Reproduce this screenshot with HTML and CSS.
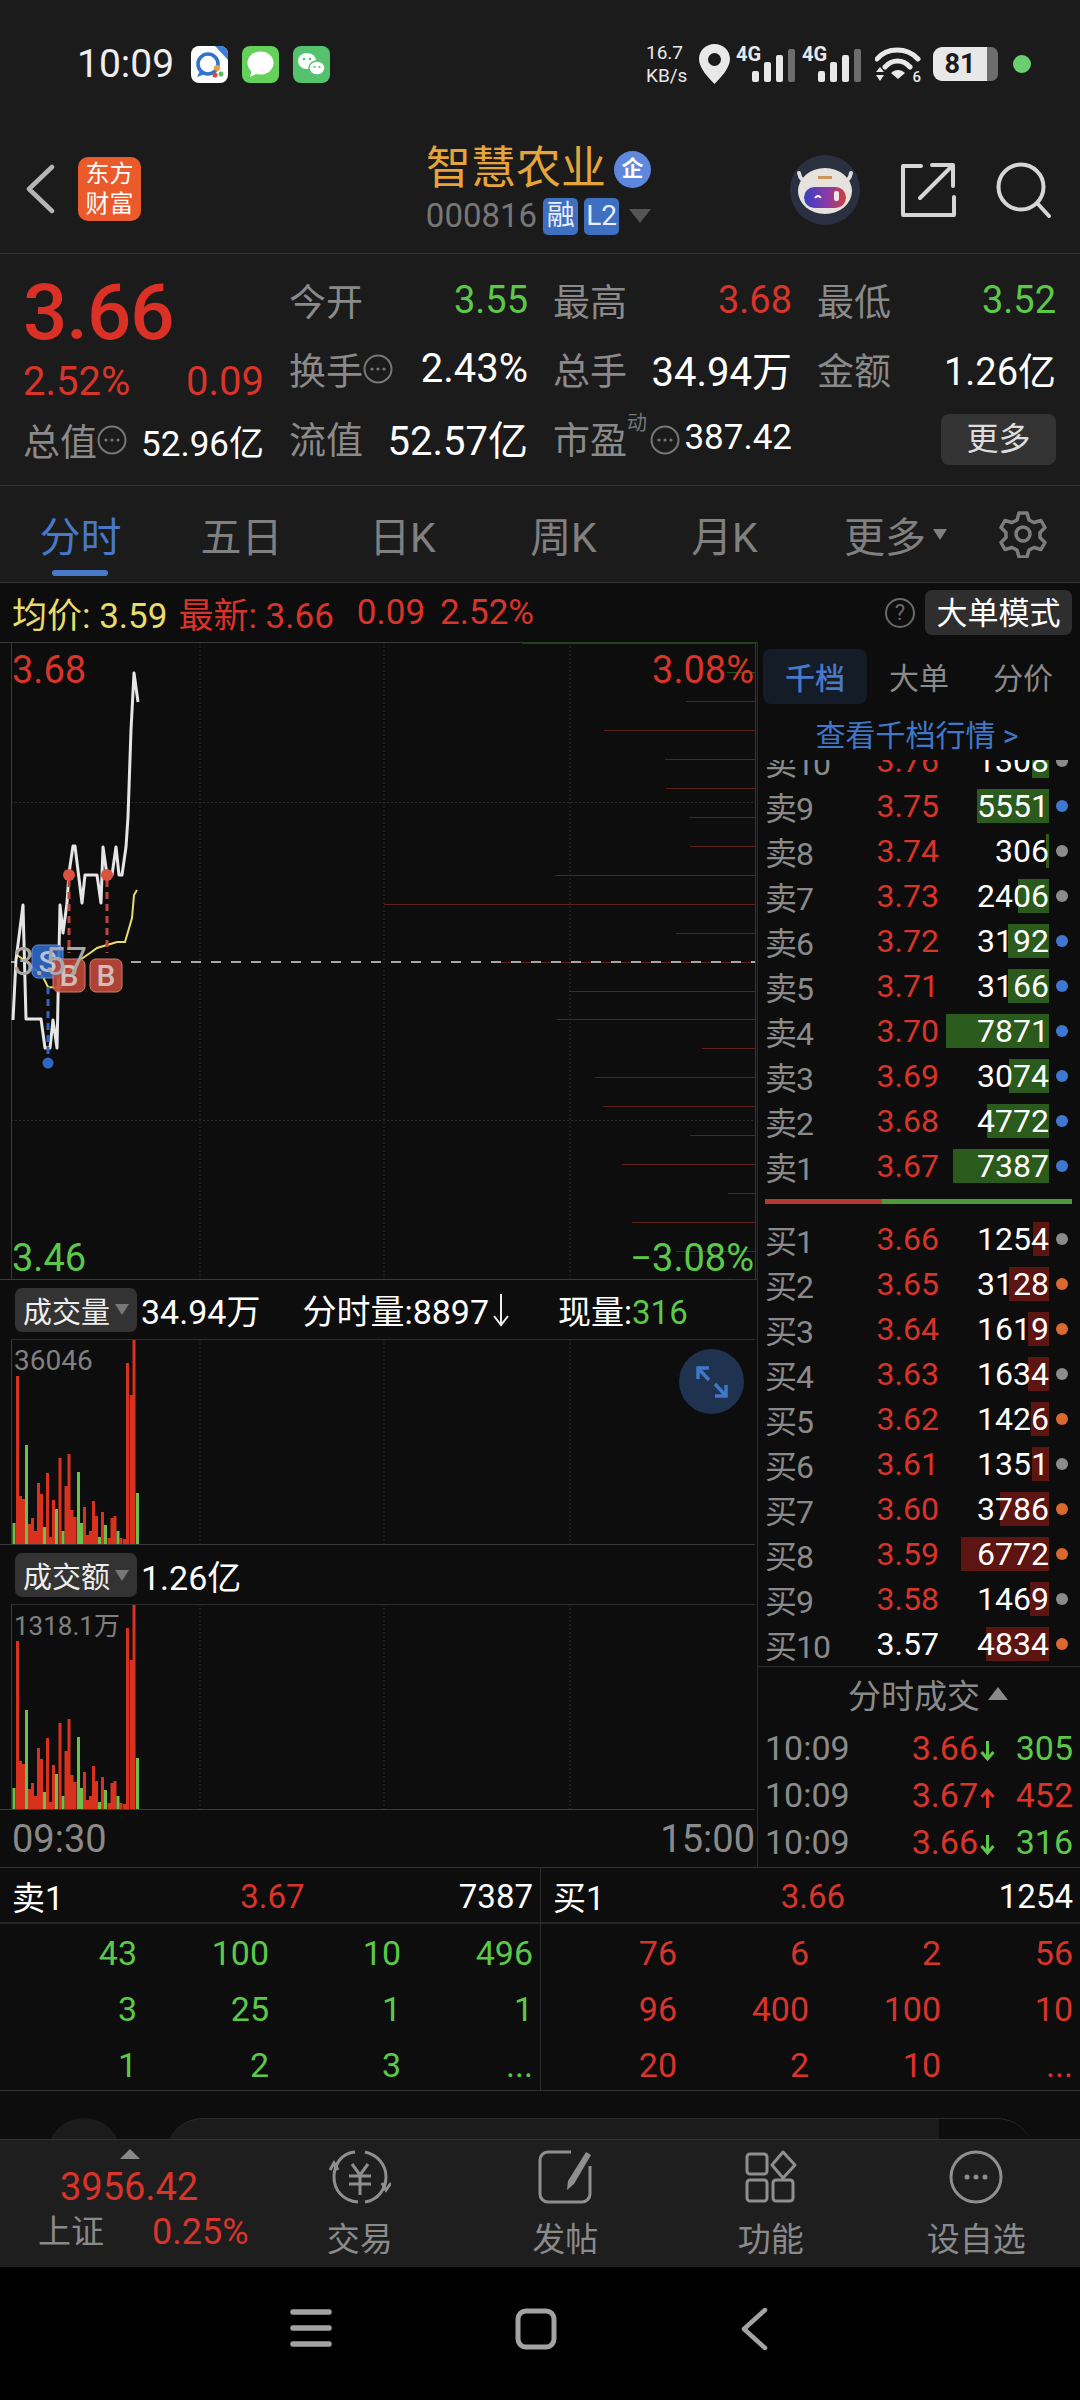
FILE: index.html
```html
<!DOCTYPE html>
<html lang="zh-CN">
<head>
<meta charset="UTF-8">
<title>智慧农业 000816</title>
<link rel="stylesheet" href="styles.css">
</head>
<body>

<svg class="defs" width="0" height="0">
    <symbol id="more-dots" viewBox="0 0 30 30">
        <circle cx="15" cy="15" r="13.5" fill="none" stroke="#777" stroke-width="2"/>
        <circle cx="9" cy="15" r="1.6" fill="#777"/>
        <circle cx="15" cy="15" r="1.6" fill="#777"/>
        <circle cx="21" cy="15" r="1.6" fill="#777"/>
    </symbol>
    <symbol id="vol-bars" viewBox="0 0 757 207">
        <g stroke-width="3" fill="none">
            <path stroke="#d8321f" d="M17.5 205V37M20.5 205V157M23.5 205V160M29.5 205V185M32.5 205V179M35.5 205V192M38.5 205V144M41.5 205V155M47.5 205V134M50.5 205V198M53.5 205V161M60 205V119M66 205V147M69 205V115M72 205V171M75 205V178M84.5 205V168M87.5 205V196M90.5 205V192M93.5 205V162M96.5 205V177M102.5 205V173M109 205V199M112 205V179M115 205V177M121 205V199M124.5 205V200M127.5 205V24M131 205V56M134 205V0"/>
            <path stroke="#6cc04a" d="M14 205V184M26.5 205V106M44.5 205V188M56.5 205V170M63 205V192M78.5 205V133M81.5 205V184M99.5 205V198M105.5 205V186M118 205V192M137.5 205V154"/>
        </g>
        <g stroke="#2c2c2c" fill="none">
            <path d="M11.5 0V206M0 205.5H755" stroke="#3a3a3a"/>
            <path d="M200 0V205M384 0V205M570 0V205" stroke-dasharray="2 2"/>
            <path d="M11 .5H755"/>
        </g>
    </symbol>
</svg>

<!-- status bar -->
<div class="statusbar">
    <span class="clock">10:09</span>
    <div class="app-icons">
        <svg width="37" height="37" viewBox="0 0 37 37">
            <rect width="37" height="37" rx="8" fill="#fff"/>
            <path d="M24 0h5a8 8 0 0 1 8 8v6z" fill="#3c7fd6"/>
            <circle cx="17" cy="18" r="10" fill="none" stroke="#2f73cf" stroke-width="3.5"/>
            <path d="M9 25l-3 6 8-3z" fill="#2f73cf"/>
            <circle cx="26" cy="22" r="3" fill="#e9a13b"/>
            <circle cx="24" cy="29" r="2.5" fill="#d9453a"/>
            <circle cx="30" cy="28" r="2.5" fill="#5cb85c"/>
        </svg>
        <svg width="37" height="37" viewBox="0 0 37 37">
            <rect width="37" height="37" rx="8" fill="#64d25a"/>
            <ellipse cx="18.5" cy="17" rx="13" ry="11.5" fill="#fff"/>
            <path d="M10 24l-2 7 8-4z" fill="#fff"/>
        </svg>
        <svg width="37" height="37" viewBox="0 0 37 37">
            <rect width="37" height="37" rx="8" fill="#55c36e"/>
            <ellipse cx="14" cy="15" rx="9" ry="8" fill="#fff"/>
            <ellipse cx="24" cy="22" rx="8" ry="7" fill="#fff" stroke="#55c36e" stroke-width="1.5"/>
            <circle cx="11" cy="13" r="1.3" fill="#55c36e"/>
            <circle cx="17" cy="13" r="1.3" fill="#55c36e"/>
            <circle cx="21.5" cy="21" r="1.1" fill="#55c36e"/>
            <circle cx="26.5" cy="21" r="1.1" fill="#55c36e"/>
        </svg>
    </div>
    <div class="sys-icons">
        <span class="netspeed">16.7<br>KB/s</span>
        <svg width="31" height="40" viewBox="0 0 31 40">
            <path fill-rule="evenodd" fill="#e8e8e8" d="M15.5 0C7 0 0 6.6 0 15c0 9 9.5 19 15.5 25C21.5 34 31 24 31 15 31 6.6 24 0 15.5 0zm0 9a6.5 6.5 0 1 1 0 13 6.500 6.500 0 0 1 0-13z"/>
        </svg>
        <div class="cell">
            <span class="cell-text">4G</span>
            <svg width="60" height="40" viewBox="0 0 60 40">
                <rect x="16" y="27" width="7" height="11" rx="2" fill="#e8e8e8"/>
                <rect x="28" y="18" width="7" height="20" rx="2" fill="#e8e8e8"/>
                <rect x="40" y="11" width="7" height="27" rx="2" fill="#e8e8e8"/>
                <rect x="52" y="5" width="7" height="33" rx="2" fill="#6d6d6d"/>
            </svg>
        </div>
        <div class="cell">
            <span class="cell-text">4G</span>
            <svg width="60" height="40" viewBox="0 0 60 40">
                <rect x="16" y="27" width="7" height="11" rx="2" fill="#e8e8e8"/>
                <rect x="28" y="18" width="7" height="20" rx="2" fill="#e8e8e8"/>
                <rect x="40" y="11" width="7" height="27" rx="2" fill="#e8e8e8"/>
                <rect x="52" y="5" width="7" height="33" rx="2" fill="#6d6d6d"/>
            </svg>
        </div>
        <div class="wifi">
            <svg width="46" height="38" viewBox="0 0 46 38">
                <path d="M2 14C12 2 32 2 43 14M10 22c7-8 18-8 25 0" fill="none" stroke="#e8e8e8" stroke-width="5" stroke-linecap="round"/>
                <path d="M16 28c4-4 10-4 14 0l-7 6z" fill="#e8e8e8"/>
                <path d="M1 27l4-5 4 5zM1 30l4 6 4-6z" fill="#e8e8e8"/>
            </svg>
            <span class="wifi-text">6</span>
        </div>
        <div class="battery"><span class="battery-level">81</span><i class="battery-rest"></i></div>
        <i class="cam-dot"></i>
    </div>
</div>

<!-- stock header -->
<header class="stock-head">
    <div class="head-left">
        <svg width="30" height="50" viewBox="0 0 30 50">
            <path d="M27 3L4 25l23 22" fill="none" stroke="#b5b5b5" stroke-width="4.5" stroke-linecap="round" stroke-linejoin="round"/>
        </svg>
        <div class="brand">东方<br>财富</div>
    </div>
    <div class="head-title">
        <div class="stock-name">智慧农业<span class="qi">企</span></div>
        <div class="stock-code">000816<span class="tag-blue">融</span><span class="tag-blue">L2</span><i class="caret-code"></i></div>
    </div>
    <div class="head-right">
        <svg width="70" height="70" viewBox="0 0 70 70">
            <defs>
                <linearGradient id="visor" x1="0" x2="1">
                    <stop offset="0" stop-color="#3a3fc0"/>
                    <stop offset=".55" stop-color="#8a3aa8"/>
                    <stop offset="1" stop-color="#d0403f"/>
                </linearGradient>
            </defs>
            <circle cx="35" cy="35" r="35" fill="#2a3040"/>
            <path d="M9 18c1 6 5 9 9 9M61 18c-1 6-5 9-9 9" fill="none" stroke="#ddd" stroke-width="4" stroke-linecap="round"/>
            <ellipse cx="35" cy="36" rx="27" ry="23" fill="#e6e3df"/>
            <rect x="28" y="21" width="14" height="3" fill="#c9975a"/>
            <rect x="14" y="32" width="42" height="21" rx="10.5" fill="url(#visor)"/>
            <path d="M25 43q3-4 6 0" fill="none" stroke="#fff" stroke-width="1.8"/>
            <rect x="44" y="36" width="5" height="10" rx="2" fill="#f3e6e6"/>
        </svg>
        <svg width="56" height="56" viewBox="0 0 56 56">
            <path d="M21 4H3v49h51V35M20 36L53 3M32 3h21v21" fill="none" stroke="#d6d6d6" stroke-width="4" stroke-linecap="round" stroke-linejoin="round"/>
        </svg>
        <svg width="56" height="56" viewBox="0 0 56 56">
            <circle cx="25" cy="25" r="22.5" fill="none" stroke="#d6d6d6" stroke-width="4"/>
            <path d="M42 42l11 12" fill="none" stroke="#d6d6d6" stroke-width="4" stroke-linecap="round"/>
        </svg>
    </div>
</header>

<!-- quote block -->
<section class="quote">
    <div class="quote-main">
        <div class="big-price">3.66</div>
        <div class="big-change"><span>2.52%</span><span>0.09</span></div>
        <div class="total-val"><span class="lbl">总值</span><svg class="info"><use href="#more-dots"/></svg><span class="val-sm">52.96亿</span></div>
    </div>
    <div class="quote-grid">
        <div class="cell-q"><span class="lbl">今开</span><span class="green">3.55</span></div>
        <div class="cell-q"><span class="lbl">最高</span><span class="red">3.68</span></div>
        <div class="cell-q"><span class="lbl">最低</span><span class="green">3.52</span></div>
        <div class="cell-q"><span class="lbl">换手<svg class="info"><use href="#more-dots"/></svg></span><span class="white val-lg">2.43%</span></div>
        <div class="cell-q"><span class="lbl">总手</span><span class="white val-lg">34.94万</span></div>
        <div class="cell-q"><span class="lbl">金额</span><span class="white">1.26亿</span></div>
        <div class="cell-q"><span class="lbl">流值</span><span class="white val-lg">52.57亿</span></div>
        <div class="cell-q"><span class="lbl pe">市盈<sup>动</sup><svg class="info"><use href="#more-dots"/></svg></span><span class="white val-sm">387.42</span></div>
        <div class="cell-q cell-btn"><span class="more-btn">更多</span></div>
    </div>
</section>

<!-- period tabs -->
<nav class="periods">
    <div class="period active"><span>分时</span></div>
    <div class="period"><span>五日</span></div>
    <div class="period"><span>日K</span></div>
    <div class="period"><span>周K</span></div>
    <div class="period"><span>月K</span></div>
    <div class="period period-more"><span>更多</span><i class="caret-small"></i></div>
    <div class="period">
        <svg width="48" height="48" viewBox="0 0 48 48">
            <path d="M20 3h8l2 7 5 2.5 7-2 4 7-5 5v5l5 5-4 7-7-2-5 2.5-2 7h-8l-2-7-5-2.5-7 2-4-7 5-5v-5l-5-5 4-7 7 2 5-2.5z" fill="none" stroke="#7d7d7d" stroke-width="3.5" stroke-linejoin="round"/>
            <circle cx="24" cy="24" r="7" fill="none" stroke="#7d7d7d" stroke-width="3.5"/>
        </svg>
    </div>
</nav>

<!-- avg / last line -->
<div class="infobar">
    <span class="yellow">均价: 3.59</span>
    <span class="red last">最新: 3.66</span>
    <span class="red">0.09</span>
    <span class="red">2.52%</span>
    <span class="help">?</span>
    <span class="big-order">大单模式</span>
</div>

<main class="board">
    <div class="charts">
        <div class="price-chart">
            <svg class="price-svg" width="757" height="638" viewBox="0 642 757 638">
                <!-- grid -->
                <g fill="none" stroke="#2c2c2c">
                    <path d="M200 642V1279M384 642V1279M570 642V1279M11 802.5H755M11 1120.5H755" stroke-dasharray="2 2"/>
                    <path d="M0 642.5H757M0 1279.5H757" stroke="#3a3a3a"/>
                    <path d="M11.5 642V1279M755.5 642V1279" stroke="#3a3a3a"/>
                </g>
                <rect x="522" y="641" width="233" height="3" fill="#24401f"/>
                <!-- order ladder -->
                <g fill="none" stroke="#5c1f1a">
                    <path stroke="#1f5a1a" d="M727 672.5H755"/>
                    <path d="M686 701.5H755M604 730.5H755M665 759.5H755M666 788.5H755M689 817.5H755M690 846.5H755M555 875.5H755M384 904.5H755M676 933.5H755M501 962.5H755M569 991.5H755M557 1019.5H755M702 1048.5H755M595 1077.5H755M603 1106.5H755M690 1135.5H755M622 1164.5H755M728 1193.5H755M632 1222.5H755M676 1251.5H755M733 1279.5H755"/>
                </g>
                <path d="M131 962H755M11 962H17" fill="none" stroke="#a8a8a8" stroke-width="2" stroke-dasharray="10 10"/>
                <!-- avg and price lines -->
                <polyline fill="none" stroke="#e9dc6a" stroke-width="2" points="17,955 27,962 43,977 48,987 60,988 67,973 80,960 90,953 97,948 107,945 117,942 125,942 132,918 134,895 137,890"/>
                <polyline fill="none" stroke="#e6e6e6" stroke-width="3" stroke-linejoin="round" points="13,1020 16,960 23,905 26,1019 41,1019 45,1048 50,1048 53,1020 57,1048 60,905 63,933 67,903 69,873 73,846 75,846 82,903 85,875 97,875 101,903 103,847 107,875 112,875 116,847 119,875 122,875 126,847 128,817 131,730 134,673 138,702"/>
                <!-- trade markers -->
                <path d="M69 880V953M107 880V953" fill="none" stroke="#b9483c" stroke-width="3" stroke-dasharray="7 5"/>
                <circle cx="69" cy="875" r="6" fill="#d9533f"/>
                <circle cx="107" cy="875" r="6" fill="#d9533f"/>
                <path d="M48 987V1057" fill="none" stroke="#2f66c4" stroke-width="3" stroke-dasharray="7 5"/>
                <circle cx="48" cy="1063" r="5.5" fill="#2f66c4"/>
                <rect x="32" y="945" width="31" height="33" rx="6" fill="#2f66c4" fill-opacity=".9" stroke="#5f8ddc"/>
                <rect x="53" y="959" width="32" height="33" rx="6" fill="#c0483a" fill-opacity=".9" stroke="#d67a6e"/>
                <rect x="90" y="959" width="32" height="33" rx="6" fill="#c0483a" fill-opacity=".9" stroke="#d67a6e"/>
                <text x="47.5" y="972" class="marker">S</text>
                <text x="69" y="986" class="marker">B</text>
                <text x="106" y="986" class="marker">B</text>
                <text x="13" y="975" class="prev-close">3.57</text>
            </svg>
            <span class="axis top-left red">3.68</span>
            <span class="axis top-right red">3.08%</span>
            <span class="axis bot-left green">3.46</span>
            <span class="axis bot-right green">−3.08%</span>
        </div>

        <div class="tagrow">
            <span class="tag">成交量<i class="caret-tag"></i></span>
            <span class="w1">34.94万</span>
            <span class="w2">分时量:8897</span>
            <svg class="down-arrow" width="18" height="34" viewBox="0 0 18 34"><path d="M9 1v30M2 23l7 9 7-9" fill="none" stroke="#eee" stroke-width="2"/></svg>
            <span class="w3">现量:<span class="green">316</span></span>
        </div>
        <div class="vol-chart">
            <svg class="vol-svg" width="757" height="207"><use href="#vol-bars"/></svg>
            <span class="vol-max">36046</span>
            <span class="expand">
                <svg width="34" height="34" viewBox="0 0 34 34">
                    <path d="M3 14V3h11M3 3l11 12M31 20v11H20M31 31L20 19" fill="none" stroke="#3f78c8" stroke-width="3.5"/>
                </svg>
            </span>
        </div>

        <div class="tagrow tagrow-b">
            <span class="tag">成交额<i class="caret-tag"></i></span>
            <span class="w1">1.26亿</span>
        </div>
        <div class="vol-chart">
            <svg class="vol-svg" width="757" height="207"><use href="#vol-bars"/></svg>
            <span class="vol-max vol-max-wan">1318.1万</span>
        </div>

        <div class="timerow"><span>09:30</span><span>15:00</span></div>
    </div>

    <aside class="book">
        <div class="book-tabs">
            <span class="book-tab active">千档</span>
            <span class="book-tab">大单</span>
            <span class="book-tab">分价</span>
        </div>
        <div class="book-link">查看千档行情 &gt;</div>

        <div class="levels">
            <div class="asks">
                <div class="row"><span class="lvl">卖10</span><span class="px red">3.76</span><span class="qty"><i class="bar bar-s" style="width:17px"></i><b>1308</b></span><i class="dot grey"></i></div>
                <div class="row"><span class="lvl">卖9</span><span class="px red">3.75</span><span class="qty"><i class="bar bar-s" style="width:72px"></i><b>5551</b></span><i class="dot blue"></i></div>
                <div class="row"><span class="lvl">卖8</span><span class="px red">3.74</span><span class="qty"><i class="bar bar-s" style="width:3px"></i><b>306</b></span><i class="dot grey"></i></div>
                <div class="row"><span class="lvl">卖7</span><span class="px red">3.73</span><span class="qty"><i class="bar bar-s" style="width:31px"></i><b>2406</b></span><i class="dot grey"></i></div>
                <div class="row"><span class="lvl">卖6</span><span class="px red">3.72</span><span class="qty"><i class="bar bar-s" style="width:41px"></i><b>3192</b></span><i class="dot blue"></i></div>
                <div class="row"><span class="lvl">卖5</span><span class="px red">3.71</span><span class="qty"><i class="bar bar-s" style="width:41px"></i><b>3166</b></span><i class="dot blue"></i></div>
                <div class="row"><span class="lvl">卖4</span><span class="px red">3.70</span><span class="qty"><i class="bar bar-s" style="width:103px"></i><b>7871</b></span><i class="dot blue"></i></div>
                <div class="row"><span class="lvl">卖3</span><span class="px red">3.69</span><span class="qty"><i class="bar bar-s" style="width:40px"></i><b>3074</b></span><i class="dot blue"></i></div>
                <div class="row"><span class="lvl">卖2</span><span class="px red">3.68</span><span class="qty"><i class="bar bar-s" style="width:62px"></i><b>4772</b></span><i class="dot blue"></i></div>
                <div class="row"><span class="lvl">卖1</span><span class="px red">3.67</span><span class="qty"><i class="bar bar-s" style="width:96px"></i><b>7387</b></span><i class="dot blue"></i></div>
            </div>
            <div class="ratio"><i class="ratio-red"></i><i class="ratio-green"></i></div>
            <div class="bids">
                <div class="row"><span class="lvl">买1</span><span class="px red">3.66</span><span class="qty"><i class="bar bar-b" style="width:16px"></i><b>1254</b></span><i class="dot grey"></i></div>
                <div class="row"><span class="lvl">买2</span><span class="px red">3.65</span><span class="qty"><i class="bar bar-b" style="width:40px"></i><b>3128</b></span><i class="dot orange"></i></div>
                <div class="row"><span class="lvl">买3</span><span class="px red">3.64</span><span class="qty"><i class="bar bar-b" style="width:21px"></i><b>1619</b></span><i class="dot orange"></i></div>
                <div class="row"><span class="lvl">买4</span><span class="px red">3.63</span><span class="qty"><i class="bar bar-b" style="width:21px"></i><b>1634</b></span><i class="dot grey"></i></div>
                <div class="row"><span class="lvl">买5</span><span class="px red">3.62</span><span class="qty"><i class="bar bar-b" style="width:18px"></i><b>1426</b></span><i class="dot orange"></i></div>
                <div class="row"><span class="lvl">买6</span><span class="px red">3.61</span><span class="qty"><i class="bar bar-b" style="width:17px"></i><b>1351</b></span><i class="dot grey"></i></div>
                <div class="row"><span class="lvl">买7</span><span class="px red">3.60</span><span class="qty"><i class="bar bar-b" style="width:49px"></i><b>3786</b></span><i class="dot orange"></i></div>
                <div class="row"><span class="lvl">买8</span><span class="px red">3.59</span><span class="qty"><i class="bar bar-b" style="width:88px"></i><b>6772</b></span><i class="dot orange"></i></div>
                <div class="row"><span class="lvl">买9</span><span class="px red">3.58</span><span class="qty"><i class="bar bar-b" style="width:19px"></i><b>1469</b></span><i class="dot grey"></i></div>
                <div class="row"><span class="lvl">买10</span><span class="px white">3.57</span><span class="qty"><i class="bar bar-b" style="width:63px"></i><b>4834</b></span><i class="dot orange"></i></div>
            </div>
        </div>

        <div class="ticks-head">分时成交<i class="caret-up"></i></div>
        <div class="tick"><span class="t-time">10:09</span><span class="red">3.66<svg class="t-arrow" width="15" height="22" viewBox="0 0 15 22"><path d="M7.5 1v18M1.5 12l6 7 6-7" fill="none" stroke="#5cc84a" stroke-width="3"/></svg></span><span class="t-vol green">305</span></div>
        <div class="tick"><span class="t-time">10:09</span><span class="red">3.67<svg class="t-arrow" width="15" height="22" viewBox="0 0 15 22"><path d="M7.5 21V3M1.5 10l6-7 6 7" fill="none" stroke="#d8342a" stroke-width="3"/></svg></span><span class="t-vol red">452</span></div>
        <div class="tick"><span class="t-time">10:09</span><span class="red">3.66<svg class="t-arrow" width="15" height="22" viewBox="0 0 15 22"><path d="M7.5 1v18M1.5 12l6 7 6-7" fill="none" stroke="#5cc84a" stroke-width="3"/></svg></span><span class="t-vol green">316</span></div>
    </aside>
</main>

<!-- best bid/ask queues -->
<section class="queues">
    <div class="queue">
        <div class="queue-head"><span>卖1</span><span class="red">3.67</span><span>7387</span></div>
        <div class="queue-body green">
            <span>43</span><span>100</span><span>10</span><span>496</span>
            <span>3</span><span>25</span><span>1</span><span>1</span>
            <span>1</span><span>2</span><span>3</span><span>...</span>
        </div>
    </div>
    <div class="queue">
        <div class="queue-head"><span>买1</span><span class="red">3.66</span><span>1254</span></div>
        <div class="queue-body red">
            <span>76</span><span>6</span><span>2</span><span>56</span>
            <span>96</span><span>400</span><span>100</span><span>10</span>
            <span>20</span><span>2</span><span>10</span><span>...</span>
        </div>
    </div>
</section>

<div class="peek">
    <i class="peek-circle"></i>
    <i class="peek-pill"><i class="peek-end"></i></i>
</div>

<footer class="bottom-tabs">
    <div class="index-box">
        <i class="caret-idx"></i>
        <div class="idx-val red">3956.42</div>
        <div class="idx-row"><span class="idx-name">上证</span><span class="red">0.25%</span></div>
    </div>
    <div class="bt">
        <svg width="62" height="54" viewBox="0 0 62 54">
            <g fill="none" stroke="#8f8f8f" stroke-width="3">
                <path d="M26 2C13 3 5 14 5 27c0 13 9 24 24 25M36 52c13-2 21-13 21-25 0-12-8-22-21-25"/>
                <path d="M1 20l4-7 4 7M53 33l4 7 5-7"/>
                <path d="M23 14l8 11 8-11M20 26h22M20 34h22M31 25v20"/>
            </g>
        </svg>
        <span>交易</span>
    </div>
    <div class="bt">
        <svg width="54" height="54" viewBox="0 0 54 54">
            <g fill="none" stroke="#8f8f8f" stroke-width="3" stroke-linejoin="round">
                <path d="M33 2H10a8 8 0 0 0-8 8v34a8 8 0 0 0 8 8h34a8 8 0 0 0 8-8V16"/>
            </g>
            <path d="M48 2l5 3-17 29-7 6 1-9z" fill="#8f8f8f"/>
        </svg>
        <span>发帖</span>
    </div>
    <div class="bt">
        <svg width="54" height="54" viewBox="0 0 54 54">
            <g fill="none" stroke="#8f8f8f" stroke-width="3" stroke-linejoin="round">
                <rect x="3" y="4" width="20" height="20" rx="3"/>
                <rect x="3" y="30" width="20" height="21" rx="3"/>
                <rect x="29" y="30" width="20" height="21" rx="3"/>
                <path d="M39 2l12 13-12 13-11-13z"/>
            </g>
        </svg>
        <span>功能</span>
    </div>
    <div class="bt">
        <svg width="54" height="54" viewBox="0 0 54 54">
            <circle cx="27" cy="27" r="25" fill="none" stroke="#8f8f8f" stroke-width="3"/>
            <circle cx="18" cy="27" r="2.5" fill="#8f8f8f"/>
            <circle cx="27" cy="27" r="2.5" fill="#8f8f8f"/>
            <circle cx="36" cy="27" r="2.5" fill="#8f8f8f"/>
        </svg>
        <span>设自选</span>
    </div>
</footer>

<!-- android nav -->
<div class="sysnav">
    <svg width="42" height="40" viewBox="0 0 42 40">
        <path d="M3 4h36M3 20h36M3 36h36" stroke="#a3a3a3" stroke-width="5.5" stroke-linecap="round"/>
    </svg>
    <svg width="42" height="42" viewBox="0 0 42 42">
        <rect x="3" y="3" width="36" height="36" rx="8" fill="none" stroke="#a3a3a3" stroke-width="5"/>
    </svg>
    <svg width="28" height="42" viewBox="0 0 28 42">
        <path d="M25 2L4 21l21 19" fill="none" stroke="#a3a3a3" stroke-width="4.5" stroke-linecap="round" stroke-linejoin="round"/>
    </svg>
</div>

</body>
</html>
```

FILE: styles.css
```css
* { box-sizing: border-box; }

body {
    margin: 0;
    width: 1080px;
    height: 2400px;
    overflow: hidden;
    background: #0d0d0d;
    color: #fff;
    font-family: Roboto, "Noto Sans CJK SC", sans-serif;
}

i { display: block; font-style: normal; }
.defs { position: absolute; }

.red { color: #d8342a; }
.green { color: #5cc84a; }
.white { color: #fff; }
.yellow { color: #e9dc6a; }

/* Status bar */
.statusbar {
    height: 128px;
    background: #1b1b1b;
    display: flex;
    align-items: center;
    padding: 0 49px 0 77px;
}
.clock { font-size: 39px; color: #eee; width: 114px; }
.app-icons { display: flex; gap: 14px; }
.app-icons svg { display: block; }
.sys-icons {
    margin-left: auto;
    display: flex;
    align-items: center;
    gap: 6px;
}
.sys-icons svg { display: block; }
.netspeed { font-size: 19px; line-height: 23px; color: #e8e8e8; width: 44px; margin-right: 3px; }
.cell { position: relative; }
.cell-text {
    position: absolute;
    left: 0;
    top: 0;
    font-size: 20px;
    font-weight: 700;
    line-height: 20px;
    color: #e8e8e8;
}
.wifi { position: relative; margin-left: 7px; }
.wifi-text {
    position: absolute;
    right: 0;
    bottom: -3px;
    font-size: 15px;
    font-weight: 500;
    line-height: 18px;
    color: #e8e8e8;
}
.battery { display: flex; align-items: center; margin-left: 6px; }
.battery-level {
    width: 54px;
    height: 34px;
    background: #e8e8e8;
    color: #1b1b1b;
    border-radius: 9px 0 0 9px;
    font-size: 27px;
    font-weight: 700;
    line-height: 34px;
    text-align: center;
}
.battery-rest { width: 11px; height: 34px; background: #6d6d6d; border-radius: 0 7px 7px 0; }
.cam-dot { width: 18px; height: 18px; border-radius: 50%; background: #6bcf70; margin-left: 9px; }

/* Stock header */
.stock-head {
    height: 126px;
    background: #1b1b1b;
    border-bottom: 1px solid #333;
    display: grid;
    grid-template-columns: 1fr auto 1fr;
    padding: 0 28px 0 25px;
}
.head-left { display: flex; align-items: center; gap: 23px; padding-bottom: 4px; }
.brand {
    width: 63px;
    height: 64px;
    background: #ea5a2b;
    border-radius: 10px;
    color: #fff;
    font-size: 24px;
    line-height: 30px;
    text-align: center;
    padding-top: 2px;
}
.head-title { display: flex; flex-direction: column; align-items: center; padding-top: 13px; }
.stock-name { font-size: 45px; line-height: 56px; color: #e5a53b; display: flex; align-items: center; gap: 8px; }
.qi {
    width: 37px;
    height: 37px;
    border-radius: 50%;
    background: #5f87dd;
    color: #fff;
    font-size: 22px;
    font-weight: 700;
    line-height: 36px;
    text-align: center;
}
.stock-code { font-size: 33px; line-height: 38px; color: #777; display: flex; align-items: center; gap: 6px; }
.tag-blue {
    min-width: 35px;
    height: 37px;
    background: #3f6fc0;
    color: #e8eefc;
    border-radius: 5px;
    font-size: 28px;
    line-height: 36px;
    text-align: center;
}
.caret-code {
    border-left: 11px solid transparent;
    border-right: 11px solid transparent;
    border-top: 14px solid #555;
    margin-left: 4px;
}
.head-right { display: flex; align-items: center; justify-content: flex-end; gap: 40px; padding-bottom: 2px; }

/* Quote block */
.quote {
    height: 232px;
    background: #1b1b1b;
    border-bottom: 1px solid #333;
    display: flex;
    padding: 0 22px 0 23px;
}
.quote-main { width: 266px; flex: none; }
.big-price { font-size: 78px; font-weight: 500; line-height: 92px; color: #db3025; margin-top: 13px; letter-spacing: -1px; }
.big-change { display: flex; justify-content: space-between; width: 241px; font-size: 40px; line-height: 46px; color: #d8342a; }
.total-val { display: flex; align-items: center; margin-top: 12px; height: 46px; }
.lbl { color: #8a8a8a; font-size: 37px; display: inline-flex; align-items: center; white-space: nowrap; }
.info { width: 30px; height: 30px; flex: none; }
.val-sm { font-size: 35px; color: #fff; }
.val-lg { font-size: 40px; }
.total-val .val-sm { margin-left: auto; margin-right: 25px; }
.quote-grid {
    flex: 1;
    display: grid;
    grid-template-columns: 239px 239px 239px;
    column-gap: 25px;
    grid-template-rows: repeat(3, 69px);
    padding-top: 11px;
    font-size: 38px;
}
.cell-q { display: flex; align-items: center; justify-content: space-between; white-space: nowrap; }
.cell-btn { justify-content: flex-end; padding-top: 3px; }
.pe sup { font-size: 20px; color: #777; line-height: 1; align-self: flex-start; margin-top: 2px; }
.pe .info { margin-top: 4px; margin-left: 3px; }
.more-btn {
    width: 115px;
    height: 51px;
    background: #333;
    border-radius: 8px;
    color: #ddd;
    font-size: 32px;
    line-height: 50px;
    text-align: center;
}

/* Period tabs */
.periods {
    height: 97px;
    background: #1b1b1b;
    border-bottom: 1px solid #333;
    display: grid;
    grid-template-columns: repeat(6, 161px) 1fr;
    align-items: center;
}
.period {
    height: 100%;
    display: flex;
    align-items: center;
    justify-content: center;
    font-size: 41px;
    color: #808080;
    position: relative;
}
.period svg { display: block; }
.period.active { color: #4878c8; }
.period.active::after {
    content: "";
    position: absolute;
    left: 52px;
    bottom: 6px;
    width: 56px;
    height: 6px;
    border-radius: 3px;
    background: #4878c8;
}
.period-more { padding-left: 20px; gap: 7px; }
.caret-small {
    border-left: 7px solid transparent;
    border-right: 7px solid transparent;
    border-top: 11px solid #808080;
}

/* Info bar */
.infobar {
    height: 59px;
    background: #0d0d0d;
    display: flex;
    align-items: center;
    padding: 0 8px 0 12px;
    font-size: 35px;
    white-space: nowrap;
}
.infobar .last { margin-left: 11px; margin-right: 23px; }
.infobar .red + .red + .red { margin-left: 15px; }
.help {
    margin-left: auto;
    margin-right: 10px;
    width: 30px;
    height: 30px;
    border: 2px solid #6a6a6a;
    border-radius: 50%;
    color: #6a6a6a;
    font-size: 22px;
    line-height: 26px;
    text-align: center;
}
.big-order {
    width: 147px;
    height: 45px;
    background: #2e2e2e;
    border-radius: 7px;
    color: #fff;
    font-size: 31px;
    line-height: 47px;
    text-align: center;
}

/* Charts column */
.board { display: flex; height: 1225px; }
.charts { width: 757px; flex: none; }
.price-chart { height: 638px; position: relative; }
.price-svg { display: block; }
.marker { font: 500 30px Roboto, sans-serif; fill: #ddd; fill-opacity: .8; text-anchor: middle; }
.prev-close { font: 400 38px Roboto, sans-serif; fill: #a8a8a8; }
.axis { position: absolute; font-size: 38px; line-height: 40px; }
.top-left { left: 12px; top: 8px; }
.top-right { right: 3px; top: 8px; }
.bot-left { left: 12px; bottom: 2px; }
.bot-right { right: 3px; bottom: 2px; }

.tagrow {
    height: 59px;
    display: flex;
    align-items: center;
    padding-left: 15px;
    font-size: 34px;
    white-space: nowrap;
}
.tagrow-b { height: 58px; }
.tag {
    width: 122px;
    height: 44px;
    background: #333;
    border-radius: 7px;
    display: flex;
    align-items: center;
    padding-left: 8px;
    font-size: 29px;
    color: #eee;
    gap: 5px;
}
.caret-tag {
    border-left: 7px solid transparent;
    border-right: 7px solid transparent;
    border-top: 11px solid #777;
}
.w1 { margin-left: 4px; }
.w2 { margin-left: 42px; }
.down-arrow { margin-left: 3px; }
.w3 { margin-left: 48px; font-size: 33px; }

.vol-chart { height: 207px; position: relative; }
.vol-svg { display: block; }
.vol-max { position: absolute; left: 14px; top: 4px; font-size: 28px; line-height: 36px; color: #808080; }
.vol-max-wan { font-size: 26px; }
.expand {
    position: absolute;
    left: 679px;
    top: 10px;
    width: 65px;
    height: 65px;
    border-radius: 50%;
    background: #1f3250;
    display: flex;
    align-items: center;
    justify-content: center;
}
.timerow {
    height: 56px;
    display: flex;
    align-items: center;
    justify-content: space-between;
    padding: 0 2px 0 12px;
    font-size: 38px;
    color: #8a8a8a;
}

/* Order book */
.book { width: 323px; flex: none; border-left: 1px solid #2c2c2c; }
.book-tabs { display: flex; padding: 7px 0 0 5px; }
.book-tab {
    width: 104px;
    height: 55px;
    border-radius: 8px;
    color: #8a8a8a;
    font-size: 30px;
    line-height: 60px;
    text-align: center;
}
.book-tab.active { background: #141c28; color: #4878c8; font-weight: 500; }
.book-link { height: 56px; color: #3f78c8; font-size: 30px; line-height: 63px; text-align: center; padding-right: 4px; }
.levels { height: 906px; overflow: hidden; }
.asks { margin-top: -22px; }
.row {
    height: 45px;
    display: grid;
    grid-template-columns: 66px 108px 110px 19px;
    align-items: center;
    padding-left: 7px;
    font-size: 32px;
    white-space: nowrap;
}
.lvl { color: #8a8a8a; letter-spacing: -1px; }
.px { text-align: right; }
.qty { position: relative; text-align: right; height: 34px; line-height: 34px; }
.qty b { position: relative; font-weight: 400; }
.bar { position: absolute; right: 0; top: 0; height: 34px; }
.bar-s { background: #2a5a1c; }
.bar-b { background: #5c1510; }
.dot { width: 12px; height: 12px; border-radius: 50%; margin-left: 7px; }
.dot.blue { background: #3f78d0; }
.dot.grey { background: #8b8b8b; }
.dot.orange { background: #d9692e; }
.ratio { display: flex; height: 5px; margin: 11px 8px 12px 7px; }
.ratio-red { width: 117px; background: #b33a32; }
.ratio-green { flex: 1; background: #4e9a3a; }

.ticks-head {
    height: 58px;
    border-top: 1px solid #2c2c2c;
    display: flex;
    align-items: center;
    justify-content: center;
    gap: 8px;
    padding: 0 0 4px 18px;
    font-size: 33px;
    color: #8a8a8a;
}
.caret-up {
    border-left: 10px solid transparent;
    border-right: 10px solid transparent;
    border-bottom: 13px solid #8a8a8a;
}
.tick {
    height: 47px;
    display: grid;
    grid-template-columns: 1fr auto 78px;
    align-items: center;
    padding: 0 7px;
    font-size: 34px;
}
.t-time { color: #8a8a8a; }
.t-vol { text-align: right; }
.t-arrow { margin-left: 2px; vertical-align: -2px; }

/* Queues */
.queues {
    display: flex;
    height: 224px;
    border-top: 1px solid #333;
    border-bottom: 1px solid #333;
}
.queue { width: 540px; }
.queue + .queue { border-left: 1px solid #2c2c2c; }
.queue-head {
    height: 56px;
    display: grid;
    grid-template-columns: 1fr auto 1fr;
    align-items: center;
    padding: 2px 7px 0 12px;
    border-bottom: 2px solid #262626;
    font-size: 33px;
}
.queue-head span:last-child { text-align: right; }
.queue-body {
    display: grid;
    grid-template-columns: repeat(4, 132px);
    grid-auto-rows: 56px;
    align-items: center;
    justify-content: end;
    padding: 1px 7px 0 0;
    font-size: 34px;
    text-align: right;
}

/* Strip peeking from behind the tab bar */
.peek {
    height: 48px;
    display: flex;
    overflow: hidden;
    padding: 27px 0 0 47px;
    gap: 45px;
}
.peek-circle { width: 74px; height: 74px; border-radius: 50%; background: #1b1b1b; flex: none; }
.peek-pill {
    width: 868px;
    height: 74px;
    border-radius: 37px;
    background: #1b1b1b;
    border-top: 1px solid #2c2c2c;
    flex: none;
    overflow: hidden;
}
.peek-end { margin-left: 773px; height: 74px; background: #0d0d0d; }

/* Bottom tab bar */
.bottom-tabs {
    height: 128px;
    background: #1e1e1e;
    border-top: 1px solid #333;
    display: grid;
    grid-template-columns: 257px repeat(4, 205.5px);
}
.index-box { position: relative; padding: 26px 0 0 38px; }
.caret-idx {
    position: absolute;
    left: 120px;
    top: 9px;
    border-left: 10px solid transparent;
    border-right: 10px solid transparent;
    border-bottom: 10px solid #8a8a8a;
}
.idx-val { font-size: 38px; line-height: 42px; margin-left: 22px; }
.idx-row { display: flex; gap: 48px; font-size: 33px; line-height: 48px; }
.idx-row .red { font-size: 36px; }
.idx-name { color: #8a8a8a; }
.bt {
    display: flex;
    flex-direction: column;
    align-items: center;
    padding-top: 10px;
    color: #8a8a8a;
    font-size: 33px;
    line-height: 44px;
}
.bt svg { display: block; margin-bottom: 14px; }

/* System nav */
.sysnav {
    height: 133px;
    background: #000;
    display: flex;
    padding: 41px 0 0 290px;
    gap: 183px;
}
.sysnav svg { display: block; }
```
